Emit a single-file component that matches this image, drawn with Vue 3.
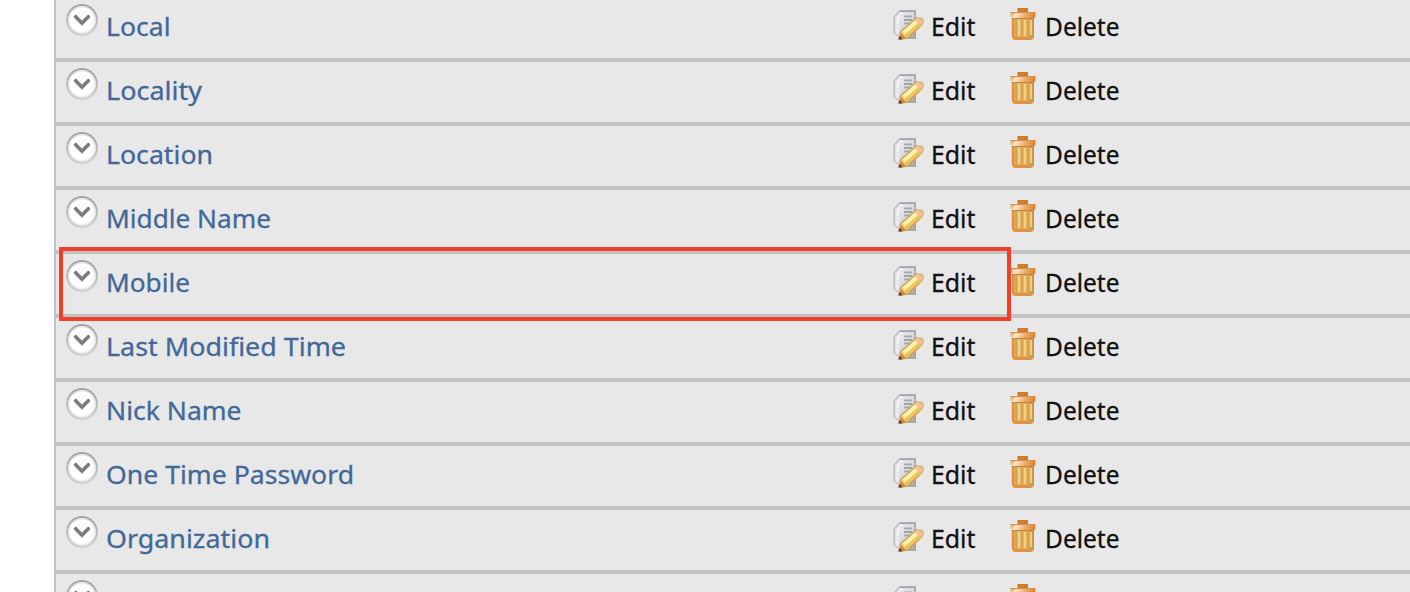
<script setup>
const rows = [
  { name: 'Local', width: 64.5 },
  { name: 'Locality', width: 96 },
  { name: 'Location', width: 107 },
  { name: 'Middle Name', width: 165 },
  { name: 'Mobile', width: 84 },
  { name: 'Last Modified Time', width: 240 },
  { name: 'Nick Name', width: 135.5 },
  { name: 'One Time Password', width: 248 },
  { name: 'Organization', width: 164 },
  { name: 'Other Id', width: 99 },
]
</script>

<template>
  <div class="page">
    <svg width="0" height="0" class="defs">
      <defs>
        <linearGradient id="can" x1="0" x2="1" y1="0" y2="0">
          <stop offset="0" stop-color="#d98738" />
          <stop offset=".25" stop-color="#eec07a" />
          <stop offset=".7" stop-color="#e3b566" />
          <stop offset="1" stop-color="#d8863a" />
        </linearGradient>
        <linearGradient id="lid" x1="0" x2="1" y1="0" y2=".2">
          <stop offset="0" stop-color="#e39a50" />
          <stop offset=".3" stop-color="#fbe8d0" />
          <stop offset=".65" stop-color="#ebb274" />
          <stop offset="1" stop-color="#d98738" />
        </linearGradient>
        <linearGradient id="sheet" x1="0" x2="1" y1="0" y2="1">
          <stop offset="0" stop-color="#eeeff0" />
          <stop offset=".5" stop-color="#d9dadd" />
          <stop offset="1" stop-color="#a2a3a6" />
        </linearGradient>
        <linearGradient id="ring" x1="0" x2="0" y1="0" y2="1">
          <stop offset="0" stop-color="#a3a4a6" />
          <stop offset="1" stop-color="#cfcfd1" />
        </linearGradient>
      </defs>
    </svg>
    <div class="list">
      <div v-for="row in rows" :key="row.name" class="row">
        <svg class="toggle" viewBox="0 0 32 32">
          <circle cx="16" cy="16" r="14.8" fill="#fefefe" stroke="url(#ring)" stroke-width="2.2" />
          <circle cx="16" cy="16" r="13.2" fill="none" stroke="#e6e6e7" stroke-width="1.4" />
          <path d="M9.7 12.8L16 19.2L22.3 12.8" fill="none" stroke="#7b7c7e" stroke-width="3.7" stroke-linecap="round" />
        </svg>
        <svg class="label" viewBox="0 0 780 60">
          <text x="-1" y="38" :textLength="row.width" lengthAdjust="spacingAndGlyphs">{{ row.name }}</text>
        </svg>
        <svg class="edit-icon" viewBox="0 0 32 32">
          <path d="M7.5 3L23 2.6V30H8L2 25V9Z" fill="#dddee0" stroke="#bec0c4" stroke-width="1.5" />
          <path d="M9.5 3H23V30H5.5V9Z" fill="url(#sheet)" />
          <path d="M8 3.2H23.2V12M23.2 21V30H15" fill="none" stroke="#a0a1a4" stroke-width="1.5" />
          <path d="M5.5 25V10L9.8 4.7" fill="none" stroke="#f7f7f8" stroke-width="1.6" />
          <path d="M12 8.3H20M12 12H20M12 15.4H17" stroke="#a3a5ae" stroke-width="1.8" />
          <path d="M7 31L9 23.5L23 11Q27 8.8 30.5 11Q31.8 14 29.6 17L15.5 30Z" fill="#f0c65c" stroke="#d5a158" stroke-width="1.4" />
          <path d="M11.5 25L25 13.3" stroke="#fff1b8" stroke-width="3.8" />
          <path d="M24 10.8Q27.5 9 30.4 11.2Q31.6 14 29.6 16.5L27.6 18L22.8 12Z" fill="#efc394" />
          <path d="M8.6 25L14.4 30.6L8 31Z" fill="#c7854a" />
          <path d="M7.2 28L11 31.6H6.6Z" fill="#4a3d32" />
        </svg>
        <span class="edit"><svg viewBox="0 0 60 60"><text x="-1" y="38" textLength="44.5" lengthAdjust="spacingAndGlyphs">Edit</text></svg></span>
        <svg class="trash" viewBox="0 0 28 32">
          <path d="M8.5 0H19V5H8.5Z" fill="#d27d2b" />
          <path d="M2.8 10H25V28Q24.5 31.8 21 32H7Q3.4 31.8 2.8 28Z" fill="url(#can)" />
          <path d="M7.5 12V28M13 12V28M19 12V28" stroke="#d5a14e" stroke-width="1.8" />
          <path d="M10 12V28M16 12V28M22 12V27" stroke="#ecd07d" stroke-width="2" />
          <path d="M3 28.5H25Q24.4 31.8 21 32H7Q3.7 31.8 3 28.5Z" fill="#dd9448" />
          <path d="M1.5 4H26.5V9L25 10.5H3L1.5 9Z" fill="url(#lid)" />
          <path d="M1.5 4.6H26.5" stroke="#da8f45" stroke-width="1.2" />
          <path d="M3 10.6H25" stroke="#d0853c" stroke-width="1.2" />
        </svg>
        <svg class="delete" viewBox="0 0 100 60"><text x="-1" y="38" textLength="74.5" lengthAdjust="spacingAndGlyphs">Delete</text></svg>
      </div>
    </div>
    <div class="highlight"></div>
  </div>
</template>

<style>
body { margin: 0; }
</style>

<style scoped>
.page {
  position: relative;
  width: 1410px;
  height: 592px;
  overflow: hidden;
  background: #fff;
  font-family: "Noto Sans", "Open Sans", sans-serif;
}
.defs { position: absolute; }
.list {
  margin: -2px 0 0 54px;
  border-left: 2px solid #c2c3c5;
}
.row {
  box-sizing: border-box;
  display: flex;
  height: 64px;
  padding-left: 10px;
  border-bottom: 4px solid #c2c3c4;
  background: #e8e8e8;
}
svg { flex: none; display: block; }
.toggle { width: 32px; height: 32px; margin-top: 6px; }
.label {
  width: 780px;
  height: 60px;
  margin-left: 9px;
  font-size: 26px;
  fill: #426899;
  stroke: #426899;
  stroke-width: .3px;
  overflow: visible;
}
.edit-icon { width: 32px; height: 32px; margin: 10px 0 0 5px; }
.edit, .edit svg { width: 60px; height: 60px; }
.edit { margin-left: 8px; }
.trash { width: 28px; height: 32px; margin: 10px 0 0 17px; }
.delete { width: 100px; height: 60px; margin-left: 9px; }
.edit svg, .delete {
  font-size: 25px;
  fill: #111;
  stroke: #111;
  stroke-width: .3px;
  overflow: visible;
}
.highlight {
  position: absolute;
  box-sizing: border-box;
  left: 59px;
  top: 247px;
  width: 952px;
  height: 74px;
  border: 4px solid #ee402a;
}
</style>
